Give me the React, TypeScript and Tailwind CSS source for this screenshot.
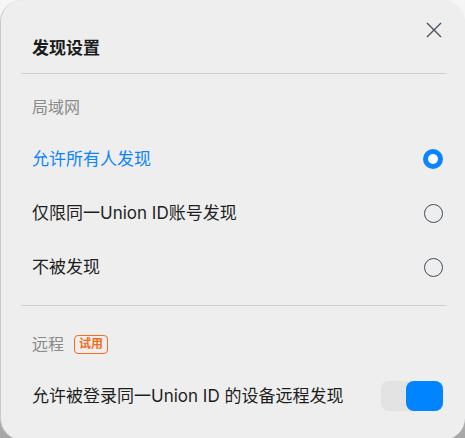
/**
 * Discovery settings sheet - LAN visibility options plus remote discovery toggle.
 */

import { useState } from 'react';

type Mode = 'all' | 'union' | 'none';

const options: { id: Mode; label: string }[] = [
  { id: 'all', label: '允许所有人发现' },
  { id: 'union', label: '仅限同一Union ID账号发现' },
  { id: 'none', label: '不被发现' },
];

function Radio({ checked }: { checked: boolean }) {
  return checked ? (
    <span className="block w-[20px] h-[20px] rounded-full border-[5px] border-[#0a84ff] bg-white" />
  ) : (
    <span className="block w-[19px] h-[19px] rounded-full border-[1.5px] border-[#3f4a5e]" />
  );
}

export default function App() {
  const [mode, setMode] = useState<Mode>('all');
  const [remote, setRemote] = useState(true);

  return (
    <div
      className="w-[465px] h-[438px] bg-gradient-to-b from-[#f6f6f6] via-[#e0e0e0] to-[#a6a6a6]"
      style={{ fontFamily: 'Inter, "Noto Sans CJK SC", sans-serif' }}
    >
      <div className="relative h-[440px] rounded-[22px] bg-[#eeeeee] pl-[20px] pr-[19px] border-l border-[#c9c9c9]">
        {/* Close */}
        <button className="absolute right-[23px] top-[22px] w-[16px] h-[16px] text-[#475166]">
          <svg viewBox="0 0 16 16" className="w-full h-full" fill="none" stroke="currentColor" strokeWidth={1.4}>
            <path d="M1 1L15 15M15 1L1 15" />
          </svg>
        </button>

        {/* Header */}
        <div className="pt-[36px] pb-[13px] pl-[11px]">
          <h1 className="text-[17px] leading-[24px] font-bold text-[#1c1c1c]">发现设置</h1>
        </div>
        <div className="h-px bg-[#cfcfcf]" />

        {/* LAN */}
        <div className="pl-[11px] pt-[21px] text-[16px] leading-[24px] text-[#8a8a8a]">局域网</div>
        <div className="mt-[13px] pl-[11px] pr-[3px]">
          {options.map((o) => (
            <div
              key={o.id}
              onClick={() => setMode(o.id)}
              className="h-[54px] flex items-center justify-between cursor-pointer"
            >
              <span
                className={`text-[17px] leading-[24px] ${
                  mode === o.id ? 'text-[#0a84ff]' : 'text-[#1e1e1e]'
                }`}
              >
                {o.label}
              </span>
              <Radio checked={mode === o.id} />
            </div>
          ))}
        </div>
        <div className="mt-[11px] h-px bg-[#cfcfcf]" />

        {/* Remote */}
        <div className="pl-[11px] pt-[26px] flex items-center gap-[10px]">
          <span className="text-[16px] leading-[24px] text-[#8a8a8a]">远程</span>
          <span className="h-[19px] px-[4px] flex items-center rounded-[4px] border border-[#f36d21] text-[12px] font-bold text-[#f36d21]">
            试用
          </span>
        </div>
        <div className="mt-[25px] pl-[11px] pr-[3px] flex items-center justify-between">
          <span className="text-[17px] leading-[24px] text-[#1e1e1e]">允许被登录同一Union ID 的设备远程发现</span>
          <button
            onClick={() => setRemote(!remote)}
            className={`w-[62px] h-[30px] rounded-[8px] bg-[#e3e3e3] flex ${remote ? 'justify-end' : 'justify-start'}`}
          >
            <span
              className={`block w-[37px] h-[30px] rounded-[8px] ${remote ? 'bg-[#0084ff]' : 'bg-white'}`}
            />
          </button>
        </div>
      </div>
    </div>
  );
}
